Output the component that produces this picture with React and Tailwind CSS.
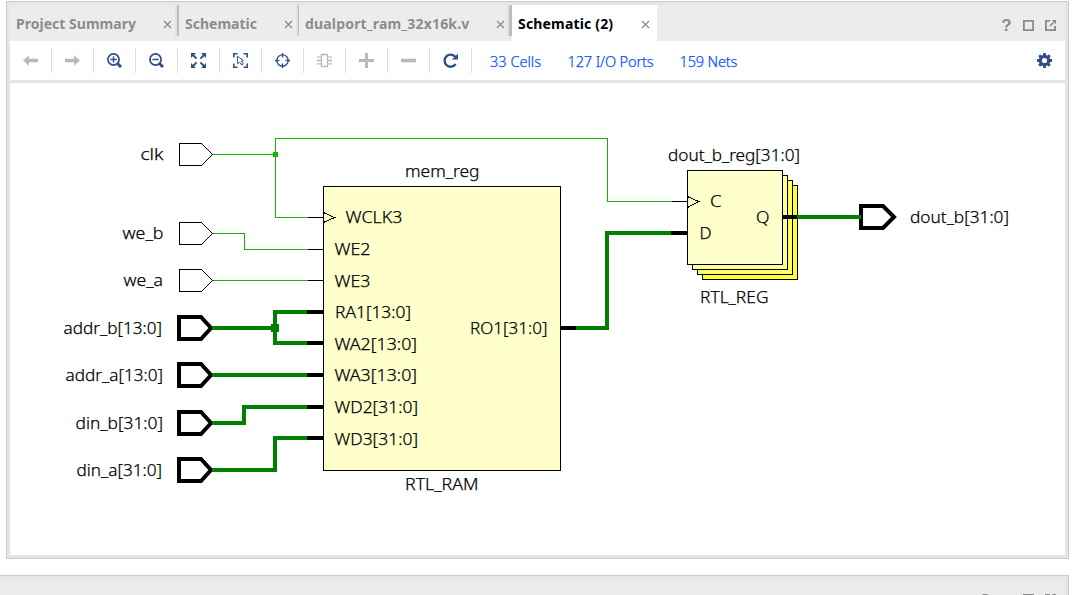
const FONT = "font-['Noto_Sans','Open_Sans',sans-serif]";

function Close() {
  return (
    <svg width="9" height="9" viewBox="0 0 9 9" className="shrink-0">
      <path d="M1 1L8 8M8 1L1 8" stroke="#8c8c8c" strokeWidth="1.3" fill="none" />
    </svg>
  );
}

function Tab({ label, box, text }) {
  return (
    <div className={`flex h-[31px] shrink-0 items-center justify-between ${box}`}>
      <span className={`whitespace-nowrap pt-[6px] text-[14px] leading-none font-bold ${text}`}>{label}</span>
      <div className="flex h-full items-center">
        <div className="pt-[7px]"><Close /></div>
      </div>
    </div>
  );
}

function Divider({ className }) {
  return <div className={`h-[31px] shrink-0 border-l-2 border-l-[#e2e2e2] bg-[#bdbdbd] ${className}`} />;
}

const NAVY = "#2f4f87";
const GREY = "#b9b9b9";

const tools = [
  { id: "back", art: <path d="M0 7.5L6 2.3V5.8H15V9.2H6V12.7Z" fill={GREY} /> },
  { id: "forward", art: <path d="M15 7.5L9 2.3V5.8H0V9.2H9V12.7Z" fill={GREY} /> },
  {
    id: "zoom-in",
    art: (
      <g fill="none" stroke={NAVY}>
        <circle cx="6.5" cy="6.5" r="5.6" strokeWidth="1.7" />
        <path d="M3.3 6.5H9.7M6.5 3.3V9.7" strokeWidth="1.3" />
        <path d="M10.5 10.5L14 14" strokeWidth="3" />
      </g>
    ),
  },
  {
    id: "zoom-out",
    art: (
      <g fill="none" stroke={NAVY}>
        <circle cx="6.5" cy="6.5" r="5.6" strokeWidth="1.7" />
        <path d="M3.3 6.5H9.7" strokeWidth="1.5" />
        <path d="M10.5 10.5L14 14" strokeWidth="3" />
      </g>
    ),
  },
  {
    id: "fit",
    art: (
      <g>
        <path d="M0 0H5L0 5ZM15 0V5L10 0ZM0 15V10L5 15ZM15 15H10L15 10Z" fill={NAVY} />
        <path d="M1.5 1.5L5.6 5.6M13.5 1.5L9.4 5.6M1.5 13.5L5.6 9.4M13.5 13.5L9.4 9.4" stroke={NAVY} strokeWidth="1.9" />
      </g>
    ),
  },
  {
    id: "select-area",
    art: (
      <g fill="none" stroke={NAVY}>
        <path d="M.8 4.5V.8H4.5M10.5 .8H14.2V4.5M14.2 10.5V14.2H10.5M4.5 14.2H.8V10.5" strokeWidth="1.6" />
        <path d="M4.2 3.2L4.8 10.8L6.6 9.2L8.8 12.2L10.3 11L8.2 8.3L10.6 7.7Z" strokeWidth="1" />
      </g>
    ),
  },
  {
    id: "target",
    art: (
      <g fill="none" stroke={NAVY}>
        <circle cx="7.5" cy="7.5" r="5.7" strokeWidth="1.3" />
        <path d="M7.5 0V4.4M7.5 10.6V15M0 7.5H4.4M10.6 7.5H15" strokeWidth="1.4" />
      </g>
    ),
  },
  {
    id: "cell",
    art: (
      <g fill="none" stroke={GREY}>
        <path d="M4.5 1.5H10.5V13.5H4.5Z" strokeWidth="1.3" />
        <path d="M0 4.2H4M0 7.5H4M0 10.8H4M11 4.2H15M11 7.5H15M11 10.8H15" strokeWidth="1.3" />
      </g>
    ),
  },
  { id: "add", art: <path d="M6 0H9V6H15V9H9V15H6V9H0V6H6Z" fill={GREY} /> },
  { id: "remove", art: <path d="M0 5.7H15V9.3H0Z" fill={GREY} /> },
  {
    id: "refresh",
    art: (
      <g>
        <path d="M12.2 3.8A6 6 0 1 0 12.6 11" fill="none" stroke={NAVY} strokeWidth="2.4" />
        <path d="M15 .8V6.4H8.8Z" fill={NAVY} />
      </g>
    ),
  },
];

function Gear() {
  return (
    <svg width="15" height="15" viewBox="0 0 15 15">
      <circle cx="7.5" cy="7.5" r="4.2" fill="none" stroke={NAVY} strokeWidth="3.2" />
      <path
        d="M7.5 0V3M7.5 12V15M0 7.5H3M12 7.5H15M2.2 2.2L4.2 4.2M10.8 10.8L12.8 12.8M12.8 2.2L10.8 4.2M4.2 10.8L2.2 12.8"
        stroke={NAVY}
        strokeWidth="2.8"
      />
    </svg>
  );
}

function Maximize() {
  return (
    <svg width="11" height="11" viewBox="0 0 11 11" className="ml-[11px] shrink-0">
      <path d="M.9 .9H10.1V10.1H.9Z" fill="none" stroke="#8a8a8a" strokeWidth="1.8" />
    </svg>
  );
}

function Float() {
  return (
    <svg width="11" height="11" viewBox="0 0 11 11" className="ml-[11px] shrink-0">
      <path d="M5 .9H.9V10.1H10.1V6" fill="none" stroke="#8a8a8a" strokeWidth="1.8" />
      <path d="M5 6L8.5 2.5" stroke="#8a8a8a" strokeWidth="1.6" />
      <path d="M6.8 0H11V4.2Z" fill="#8a8a8a" />
    </svg>
  );
}

const labels = [
  ["clk", 141, 163, 160],
  ["we_b", 123, 163, 239],
  ["we_a", 124, 162.5, 286],
  ["addr_b[13:0]", 64, 161.5, 334],
  ["addr_a[13:0]", 66, 162.5, 381],
  ["din_b[31:0]", 76, 162.5, 429],
  ["din_a[31:0]", 77, 161.5, 476],
  ["mem_reg", 405.5, 479, 177],
  ["WCLK3", 346, 402, 223],
  ["WE2", 335, 370, 255],
  ["WE3", 335, 370, 287],
  ["RA1[13:0]", 335.5, 410.5, 318],
  ["WA2[13:0]", 335, 416.5, 350],
  ["WA3[13:0]", 335, 416.5, 381],
  ["WD2[31:0]", 335, 417.5, 413],
  ["WD3[31:0]", 335, 417.5, 445],
  ["RO1[31:0]", 470.5, 547, 334],
  ["RTL_RAM", 405.5, 478, 490],
  ["dout_b_reg[31:0]", 668.5, 799.5, 161],
  ["C", 710.5, 721, 207],
  ["Q", 756.5, 769, 223],
  ["D", 700, 711, 239],
  ["dout_b[31:0]", 910.5, 1008.5, 223],
  ["RTL_REG", 700.5, 768, 303],
];

const thinPorts = [154, 233, 280];
const thickPorts = [328, 375, 423, 470];
const stack = [
  [15, "#ffff33"],
  [10, "#ffff66"],
  [5, "#ffff99"],
  [0, "#ffffcc"],
];

function Schematic() {
  return (
    <svg width="1055" height="472" viewBox="10 83 1055 472" className="block">
      <g fill="none" shapeRendering="crispEdges">
        <g stroke="#14b400">
          <path d="M212 154.5H275.5M308 217.5H275.5V138.5H607.5V201.5H672" />
          <path d="M212 233.5H244.5V249.5H308M212 280.5H308" />
        </g>
        <rect x="273" y="152" width="5" height="5" fill="#14b400" />
        <g stroke="#008000" strokeWidth="4">
          <path d="M212 328H275M307 312H275V343H307" />
          <path d="M212 375H307M212 423H244V407H307M212 470H275V438H307" />
          <path d="M576 328H607V233H671" />
        </g>
        <rect x="271" y="324" width="8" height="8" fill="#008000" />
        <path d="M308 217.5H323M308 249.5H323M308 280.5H323M672 201.5H687" stroke="#000" />
        <path
          d="M307 312H323M307 343H323M307 375H323M307 407H323M307 438H323M561 328H576M671 233H687"
          stroke="#000"
          strokeWidth="4"
        />
        <rect x="323.5" y="186.5" width="237" height="284" fill="#ffffcc" stroke="#000" />
        {stack.map(([d, fill]) => (
          <rect key={d} x={687.5 + d} y={170.5 + d} width="95" height="94" fill={fill} stroke="#000" />
        ))}
        <path d="M783 217H797" stroke="#000" strokeWidth="4" />
        {thinPorts.map((y) => (
          <path key={y} d={`M179.5 ${y - 10.5}H201.5L212.5 ${y + 0.5}L201.5 ${y + 11.5}H179.5Z`} stroke="#000" />
        ))}
        <path d="M323.5 212.5L334.5 217.5L323.5 222.5M687.5 196.5L698.5 201.5L687.5 207.5" stroke="#000" />
      </g>
      <g fill="none" stroke="#000" strokeWidth="4">
        {thickPorts.map((y) => (
          <path key={y} d={`M179 ${y - 11}H201L211 ${y}L201 ${y + 11}H179Z`} />
        ))}
        <path d="M861 206H883L894 217L883 228H861Z" />
      </g>
      <path d="M212 328H216M212 375H216M212 423H216M212 470H216M797 217H861" stroke="#008000" strokeWidth="4" />
      <g className={`${FONT} text-[16.5px] font-light`} fill="#000" stroke="#000" strokeWidth="0.25">
        {labels.map(([t, a, b, y]) => (
          <text key={t} x={a - 0.5} y={y} textLength={b - a + 1} lengthAdjust="spacingAndGlyphs">
            {t}
          </text>
        ))}
      </g>
    </svg>
  );
}

export default function App() {
  return (
    <div className={`h-[595px] w-[1080px] overflow-hidden bg-white pt-px ${FONT}`}>
      <section className="ml-[6px] h-[558px] w-[1063px] border border-[#c9cbca] bg-[#e6e6e6] p-[3px]">
        <header className="flex h-[36px] justify-between bg-[#ececec]">
          <div className="flex">
            <Tab label="Project Summary" box="w-[165px] pl-[6px] pr-[3px]" text="text-[#8c8c8c] tracking-[0.02px]" />
            <Divider className="w-[4px]" />
            <Tab label="Schematic" box="w-[117px] pl-[6px] pr-[3px]" text="text-[#8c8c8c] tracking-[0px]" />
            <Divider className="w-[3px]" />
            <Tab label="dualport_ram_32x16k.v" box="w-[208px] pl-[6px] pr-[2px]" text="text-[#8c8c8c] tracking-[0.18px]" />
            <Divider className="w-[5px]" />
            <div className="h-[36px] bg-white">
              <Tab label="Schematic (2)" box="w-[145px] pl-[6px] pr-[7px]" text="text-black tracking-[0.17px]" />
            </div>
          </div>
          <div className="flex items-start pt-[15px] pr-[9px]">
            <span className="w-[11px] text-center font-['Liberation_Sans',sans-serif] text-[17px] leading-[11px] font-bold text-[#8a8a8a]">?</span>
            <Maximize />
            <Float />
          </div>
        </header>
        <div className="flex h-[39px] items-center bg-white">
          {tools.map((t) => (
            <div key={t.id} className="flex h-[25px] w-[42px] shrink-0 items-center justify-center border-r border-[#dcdcdc]">
              <svg width="15" height="15" viewBox="0 0 15 15">{t.art}</svg>
            </div>
          ))}
          <div className="flex flex-1 pt-[2px] pl-[18px] text-[14.5px] leading-none font-light whitespace-nowrap text-[#0a50ff] [-webkit-text-stroke:0.25px_#0a50ff]">
            <span className="w-[77.5px] tracking-[0.02px]">33 Cells</span>
            <span className="w-[112px] tracking-[-0.12px]">127 I/O Ports</span>
            <span className="tracking-[-0.15px]">159 Nets</span>
          </div>
          <div className="pr-[13px]"><Gear /></div>
        </div>
        <main className="mt-[3px] h-[472px] bg-white">
          <Schematic />
        </main>
      </section>
      <section className="mt-[16px] h-[60px] w-[1069px] border-t border-r border-[#c9cbca] bg-[#e6e6e6] pt-[3px] pr-[3px]">
        <div className="flex h-[56px] items-start justify-end bg-[#ececec] pt-[15px] pr-[9px]">
          <svg width="11" height="11" viewBox="0 0 11 11" className="mr-[21px]">
            <path d="M1.5 4C1.5 -.2 9 -.2 9 3.5C9 6 5.5 5.5 5.5 8M5.5 9.2V11" fill="none" stroke="#8a8a8a" strokeWidth="1.8" />
          </svg>
          <Maximize />
          <Float />
        </div>
      </section>
    </div>
  );
}
